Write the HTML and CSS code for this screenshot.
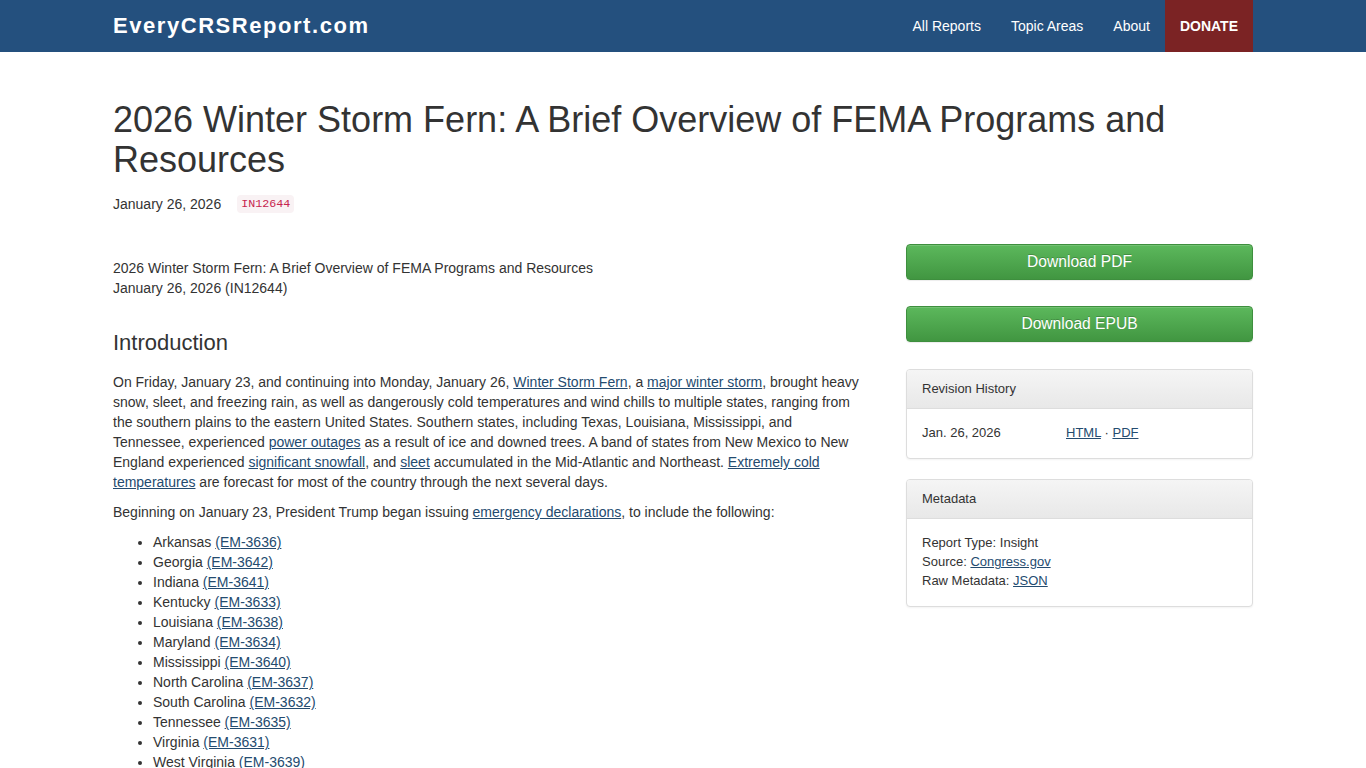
FILE: index.html
```html
<!DOCTYPE html>
<html lang="en">
<head>
<meta charset="utf-8">
<title>2026 Winter Storm Fern: A Brief Overview of FEMA Programs and Resources</title>
<link rel="stylesheet" href="styles.css">
</head>
<body>
<nav class="navbar">
  <div class="nav-inner">
    <a class="brand" href="#">EveryCRSReport.com</a>
    <ul class="nav-links">
      <li><a href="#">All Reports</a></li>
      <li><a href="#">Topic Areas</a></li>
      <li><a href="#">About</a></li>
      <li><a class="donate" href="#">DONATE</a></li>
    </ul>
  </div>
</nav>
<main class="container">
  <header class="report-head">
    <h1>2026 Winter Storm Fern: A Brief Overview of FEMA Programs and Resources</h1>
    <div class="meta-line"><span>January 26, 2026</span><code class="code">IN12644</code></div>
  </header>
  <div class="row">
    <article class="report">
      <p class="first">2026 Winter Storm Fern: A Brief Overview of FEMA Programs and Resources<br>January 26, 2026 (IN12644)</p>
      <h3>Introduction</h3>
      <p>On Friday, January 23, and continuing into Monday, January 26, <a href="#">Winter Storm Fern</a>, a <a href="#">major winter storm</a>, brought heavy snow, sleet, and freezing rain, as well as dangerously cold temperatures and wind chills to multiple states, ranging from the southern plains to the eastern United States. Southern states, including Texas, Louisiana, Mississippi, and Tennessee, experienced <a href="#">power outages</a> as a result of ice and downed trees. A band of states from New Mexico to New England experienced <a href="#">significant snowfall</a>, and <a href="#">sleet</a> accumulated in the Mid-Atlantic and Northeast. <a href="#">Extremely cold temperatures</a> are forecast for most of the country through the next several days.</p>
      <p>Beginning on January 23, President Trump began issuing <a href="#">emergency declarations</a>, to include the following:</p>
      <ul>
        <li>Arkansas <a href="#">(EM-3636)</a></li>
        <li>Georgia <a href="#">(EM-3642)</a></li>
        <li>Indiana <a href="#">(EM-3641)</a></li>
        <li>Kentucky <a href="#">(EM-3633)</a></li>
        <li>Louisiana <a href="#">(EM-3638)</a></li>
        <li>Maryland <a href="#">(EM-3634)</a></li>
        <li>Mississippi <a href="#">(EM-3640)</a></li>
        <li>North Carolina <a href="#">(EM-3637)</a></li>
        <li>South Carolina <a href="#">(EM-3632)</a></li>
        <li>Tennessee <a href="#">(EM-3635)</a></li>
        <li>Virginia <a href="#">(EM-3631)</a></li>
        <li>West Virginia <a href="#">(EM-3639)</a></li>
      </ul>
    </article>
    <aside class="sidebar">
      <a class="btn" href="#">Download PDF</a>
      <a class="btn" href="#">Download EPUB</a>
      <section class="panel rev">
        <div class="panel-heading">Revision History</div>
        <div class="panel-body rev-grid">
          <span>Jan. 26, 2026</span>
          <span><a href="#">HTML</a> · <a href="#">PDF</a></span>
        </div>
      </section>
      <section class="panel">
        <div class="panel-heading">Metadata</div>
        <div class="panel-body">
          <div>Report Type: Insight</div>
          <div>Source: <a href="#">Congress.gov</a></div>
          <div>Raw Metadata: <a href="#">JSON</a></div>
        </div>
      </section>
    </aside>
  </div>
</main>
</body>
</html>
```

FILE: styles.css
```css
* { box-sizing: border-box; }
html, body { margin: 0; padding: 0; }
body {
  font-family: "Liberation Sans", Arial, Helvetica, sans-serif;
  font-size: 14px;
  line-height: 20px;
  color: #333;
  background: #fff;
}
a { color: #244b6f; text-decoration: underline; }

.navbar {
  background: #24507e;
  height: 52px;
}
.nav-inner {
  width: 1140px;
  margin: 0 auto;
  height: 100%;
  display: flex;
  align-items: stretch;
  justify-content: space-between;
}
.brand {
  color: #fff;
  text-decoration: none;
  font-weight: bold;
  font-size: 22px;
  letter-spacing: 1.55px;
  line-height: 52px;
}
.nav-links {
  list-style: none;
  margin: 0;
  padding: 0;
  display: flex;
}
.nav-links a {
  display: block;
  color: #fff;
  text-decoration: none;
  padding: 0 15px;
  line-height: 52px;
  height: 52px;
}
.nav-links a.donate {
  background: #7b2324;
  font-weight: bold;
}

.container {
  width: 1140px;
  margin: 0 auto;
}
.report-head { padding-top: 48px; }
h1 {
  font-size: 36px;
  line-height: 39.6px;
  font-weight: normal;
  margin: 0 0 15px;
  color: #333;
}
.meta-line { display: flex; align-items: center; }
.code {
  font-family: "Liberation Mono", "DejaVu Sans Mono", monospace;
  font-size: 11.7px;
  line-height: 14px;
  color: #c7254e;
  background: #f9f2f4;
  border-radius: 4px;
  padding: 2px 4px;
  margin-left: 16px;
}

.row {
  display: grid;
  grid-template-columns: 750px 347px;
  column-gap: 43px;
  margin-top: 30px;
}
.report p { margin: 0 0 10px; }
.report p.first { margin-top: 14px; }
.report h3 {
  font-size: 22px;
  line-height: 24px;
  font-weight: normal;
  margin: 33px 0 17px;
}
.report ul { margin: 0 0 10px; padding-left: 40px; }

.sidebar { font-size: 13px; line-height: 19px; }
.btn {
  display: block;
  text-align: center;
  color: #fff;
  text-decoration: none;
  font-size: 15.6px;
  line-height: 20px;
  padding: 7px 16px;
  border: 1px solid #3e8f3e;
  border-radius: 4px;
  background: linear-gradient(#5cb85c, #419641);
  text-shadow: 0 -1px 0 rgba(0,0,0,.2);
  box-shadow: inset 0 1px 0 rgba(255,255,255,.15), 0 1px 1px rgba(0,0,0,.075);
  margin-bottom: 26px;
}
.panel {
  border: 1px solid #ddd;
  border-radius: 4px;
  box-shadow: 0 1px 2px rgba(0,0,0,.05);
  margin-bottom: 20px;
  background: #fff;
}
.panel.rev { margin-top: 27px; }
.panel-heading {
  padding: 9px 15px 10px;
  background: linear-gradient(#f5f5f5, #e8e8e8);
  border-bottom: 1px solid #ddd;
  border-radius: 3px 3px 0 0;
  color: #333;
}
.panel-body { padding: 14px 15px 16px; }
.rev-grid { display: grid; grid-template-columns: 144px auto; }
```
